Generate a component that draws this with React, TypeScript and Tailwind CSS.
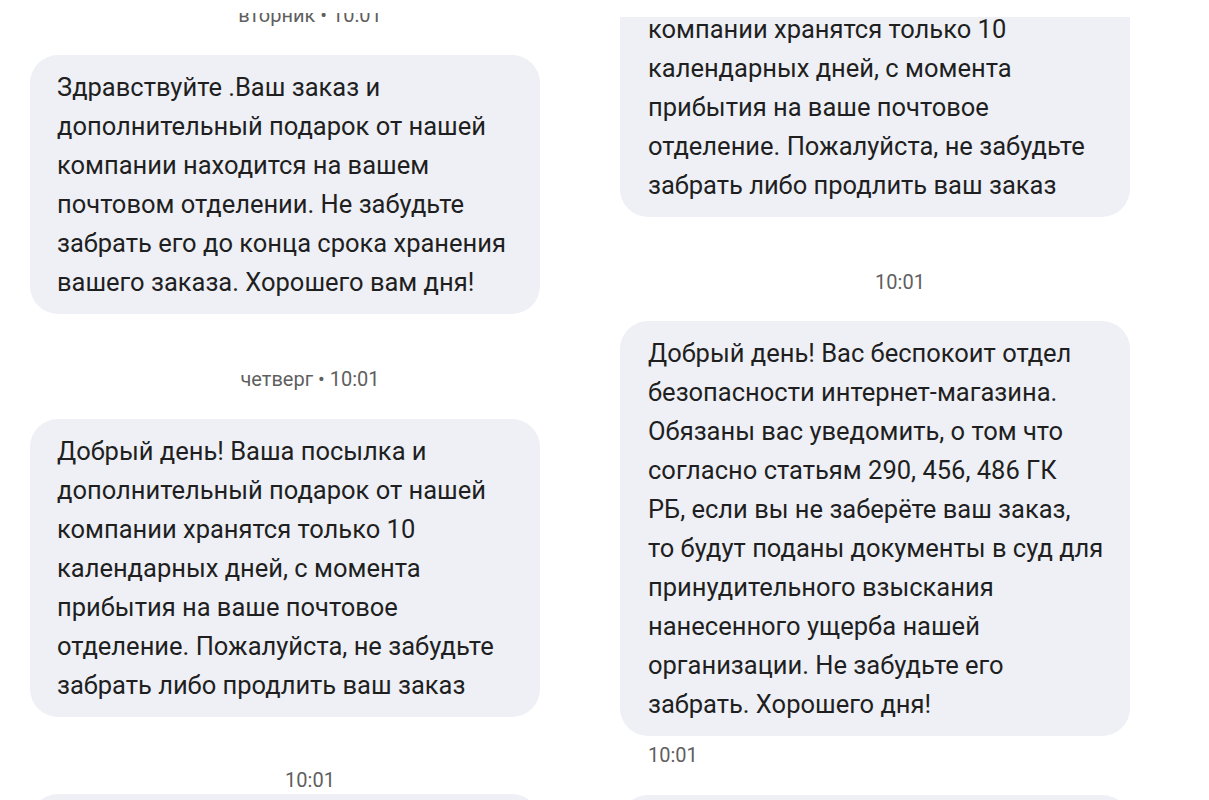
const font = { fontFamily: "Roboto, 'Noto Sans', sans-serif" };

function Bubble({ lines, className = "" }: { lines: string[]; className?: string }) {
  return (
    <div
      className={
        "w-[510px] shrink-0 rounded-[28px] bg-[#eef0f6] pl-[27px] pr-3 pt-[13px] pb-[12px] text-[25.5px] leading-[39px] text-[#1f1f1f] " +
        className
      }
    >
      {lines.map((l, i) => (
        <div key={i} className="whitespace-nowrap">
          {l}
        </div>
      ))}
    </div>
  );
}

const parcel = [
  "Добрый день! Ваша посылка и",
  "дополнительный подарок от нашей",
  "компании хранятся только 10",
  "календарных дней, с момента",
  "прибытия на ваше почтовое",
  "отделение. Пожалуйста, не забудьте",
  "забрать либо продлить ваш заказ",
];

const hello = [
  "Здравствуйте .Ваш заказ и",
  "дополнительный подарок от нашей",
  "компании находится на вашем",
  "почтовом отделении. Не забудьте",
  "забрать его до конца срока хранения",
  "вашего заказа. Хорошего вам дня!",
];

const security = [
  "Добрый день! Вас беспокоит отдел",
  "безопасности интернет-магазина.",
  "Обязаны вас уведомить, о том что",
  "согласно статьям 290, 456, 486 ГК",
  "РБ, если вы не заберёте ваш заказ,",
  "то будут поданы документы в суд для",
  "принудительного взыскания",
  "нанесенного ущерба нашей",
  "организации. Не забудьте его",
  "забрать. Хорошего дня!",
];

function Stamp({ children, className = "" }: { children: React.ReactNode; className?: string }) {
  return <div className={"h-[20px] text-[20px] leading-[20px] text-[#5f5f5f] " + className}>{children}</div>;
}

export default function App() {
  return (
    <div className="flex h-[800px] w-[1209px] overflow-hidden bg-white" style={font}>
      {/* left screenshot */}
      <div className="flex w-[620px] shrink-0 flex-col">
        <div className="h-[13px] shrink-0 bg-white" />
        <div className="flex-1 overflow-hidden">
          <div className="-mt-[8px] flex flex-col">
            <Stamp className="mb-[30px] text-center">вторник • 10:01</Stamp>
            <Bubble lines={hello} className="ml-[30px]" />
            <Stamp className="mt-[55px] mb-[30px] text-center">четверг • 10:01</Stamp>
            <Bubble lines={parcel} className="ml-[30px]" />
            <Stamp className="mt-[53px] mb-[4px] text-center">10:01</Stamp>
            <Bubble lines={["Добрый день!"]} className="ml-[30px]" />
          </div>
        </div>
      </div>

      {/* right screenshot */}
      <div className="flex flex-1 flex-col">
        <div className="h-[17px] shrink-0 bg-white" />
        <div className="flex-1 overflow-hidden">
          <div className="-mt-[98px] flex flex-col">
            <Bubble lines={parcel} className="pl-[28px]" />
            <Stamp className="mt-[55px] mb-[29px] w-[560px] text-center">10:01</Stamp>
            <Bubble lines={security} className="pl-[28px]" />
            <Stamp className="mt-[9px] mb-[30px] pl-[28px]">10:01</Stamp>
            <Bubble lines={["Добрый день!"]} />
          </div>
        </div>
      </div>
    </div>
  );
}
